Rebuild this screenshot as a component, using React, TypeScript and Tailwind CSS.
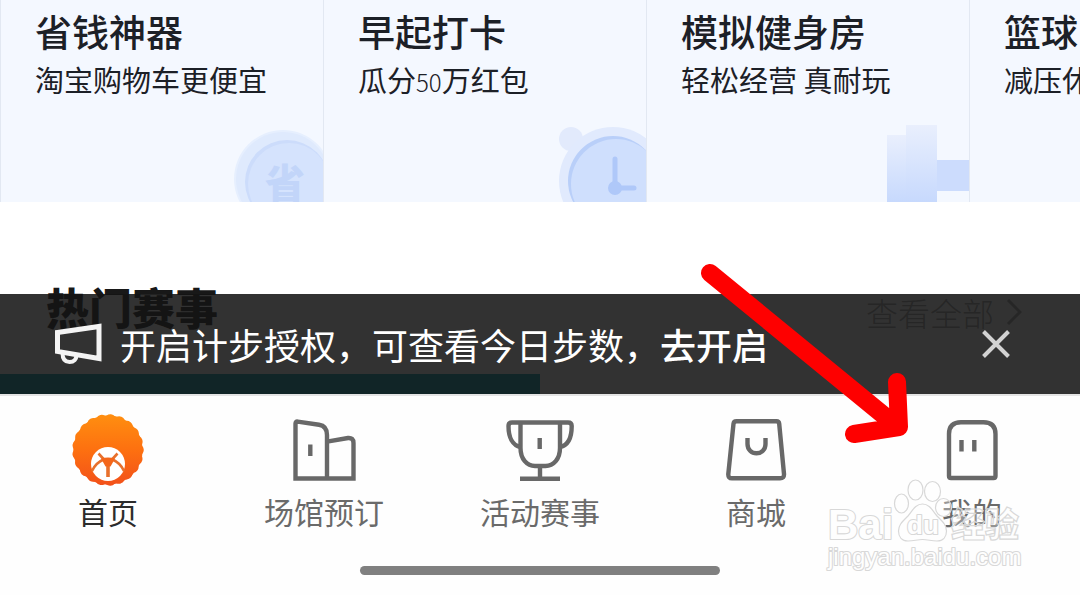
import type React from "react"

interface Tab {
  label: string
  icon: React.ReactNode
  active?: boolean
}

interface Promo {
  title: string
  text: React.ReactNode
  art?: React.ReactNode
}

const HomeIcon: React.FC = () => (
  <svg width="72" height="72" viewBox="0 0 72 72" aria-hidden="true">
    <defs>
      <linearGradient id="mane" gradientUnits="userSpaceOnUse" x1="0" y1="0" x2="0" y2="72">
        <stop offset="0" stopColor="#ff8f10" />
        <stop offset="0.5" stopColor="#fd7010" />
        <stop offset="1" stopColor="#f2501a" />
      </linearGradient>
    </defs>
    <circle cx="36" cy="36" r="34.7" fill="url(#mane)" />
    {/* Scalloped edge */}
    <circle
      cx="36"
      cy="36"
      r="29.8"
      fill="none"
      stroke="url(#mane)"
      strokeWidth="12"
      strokeLinecap="round"
      strokeDasharray="0.1 8.816"
    />
    <circle cx="36" cy="50" r="17" fill="#fff" />
    <g fill="none" stroke="#e8702c" strokeWidth="2.6">
      <path d="M26.500 39.500L32 45.500M45.500 39.500L40 45.500" />
      <path d="M36 50V63" strokeWidth="3.6" />
      <path d="M20 57Q23.500 49 31.500 45.500M52 57Q48.500 49 40.500 45.500" />
    </g>
    <path d="M29 44.500Q36 42.500 43 44.500L38.500 52.500H33.500Z" fill="#f4661a" />
  </svg>
)

const LineIcon: React.FC<{ children: React.ReactNode }> = ({ children }) => (
  <svg
    width="72"
    height="72"
    viewBox="0 0 72 72"
    fill="none"
    stroke="#686868"
    strokeWidth="4.4"
    aria-hidden="true"
  >
    {children}
  </svg>
)

const tabs: Tab[] = [
  { label: "首页", icon: <HomeIcon />, active: true },
  {
    label: "场馆预订",
    icon: (
      <LineIcon>
        <path d="M39 64.500H7.500V9.500Q7.500 7.300 9.700 7.600L31 10.800Q39 12 39 21ZM39 27.600L60 24Q65.500 23.500 65.500 29V64.500H39" />
        <path d="M22.300 30.500V42" />
      </LineIcon>
    ),
  },
  {
    label: "活动赛事",
    icon: (
      <LineIcon>
        <path d="M16.500 8.500V34C16.500 45 23 52 31 52H41.500C49.500 52 56 45 56 34V8.500" />
        <path d="M16.500 33C9 31.500 4.500 24 4.500 12Q4.500 8.500 8 8.500H64Q67.700 8.500 67.700 12C67.700 24 63.500 31.500 56 33" />
        <path d="M36 52V64.700M16 64.700H56M35.700 24V35" />
      </LineIcon>
    ),
  },
  {
    label: "商城",
    icon: (
      <LineIcon>
        <path d="M16.500 7.200H56.500Q59 7.200 59.200 9.700L64 60Q64.300 64.300 60 64.300H12Q8 64.300 8.300 60L13.500 9.700Q13.800 7.200 16.500 7.200Z" />
        <path d="M27.500 24V30C27.500 35.500 31.500 39.300 36.500 39.300S45.500 35.500 45.500 30V24" />
      </LineIcon>
    ),
  },
  {
    label: "我的",
    icon: (
      <LineIcon>
        <path d="M13 20Q13 8.200 25 8.200H47.500Q59.500 8.200 59.500 20V62Q59.500 64 57.500 64H15Q13 64 13 62Z" />
        <path d="M25.500 26V37.500M38.300 26V37.500" />
      </LineIcon>
    ),
  },
]

const CoinArt: React.FC = () => (
  <svg width="92" height="80" viewBox="0 0 92 80" aria-hidden="true">
    <circle cx="52" cy="57" r="49" fill="#e6effe" />
    <circle cx="52" cy="57" r="47" fill="#dfeafd" />
    <circle cx="56" cy="60" r="42" fill="#ccdcfb" />
    <circle cx="58" cy="62" r="41" fill="#d5e3fd" />
    <text
      x="34"
      y="76"
      fontSize="40"
      fontWeight="900"
      fill="#c2d5f9"
      fontFamily="'Noto Sans CJK SC', sans-serif"
    >
      省
    </text>
  </svg>
)

const ClockArt: React.FC = () => (
  <svg width="92" height="80" viewBox="0 0 92 80" aria-hidden="true">
    <circle cx="17" cy="17" r="12" fill="#e2eafc" />
    <circle cx="59" cy="59" r="54" fill="#e1eafd" />
    <circle cx="59" cy="59" r="45" fill="#b9cff9" />
    <circle cx="62" cy="62" r="45" fill="#cfdffd" />
    <g stroke="#afc8f9" strokeLinecap="round">
      <path d="M61 37V66" strokeWidth="5" />
      <path d="M61 66H80" strokeWidth="5" />
    </g>
    <circle cx="61" cy="66" r="7" fill="#afc8f9" />
  </svg>
)

const DumbbellArt: React.FC = () => (
  <svg width="92" height="80" viewBox="0 0 92 80" aria-hidden="true">
    <defs>
      <linearGradient id="plate" x1="0" y1="0" x2="0" y2="1">
        <stop offset="0" stopColor="#e9effd" />
        <stop offset="1" stopColor="#c7d9fd" />
      </linearGradient>
    </defs>
    <rect x="10" y="13" width="20" height="67" fill="url(#plate)" />
    <rect x="29" y="3" width="31" height="77" fill="url(#plate)" />
    <rect x="60" y="38" width="32" height="31" fill="#ccdcfd" />
  </svg>
)

const promos: Promo[] = [
  { title: "省钱神器", text: "淘宝购物车更便宜", art: <CoinArt /> },
  {
    title: "早起打卡",
    text: (
      <>
        瓜分<span className="text-2xl leading-none font-light">50</span>万红包
      </>
    ),
    art: <ClockArt />,
  },
  { title: "模拟健身房", text: "轻松经营 真耐玩", art: <DumbbellArt /> },
  { title: "篮球", text: "减压休" },
]

const PromoCard: React.FC<Promo> = ({ title, text, art }) => (
  <a
    href="#"
    className="flex h-[202px] w-[323px] shrink-0 flex-col overflow-hidden border-l border-[#e2e8f2] bg-[#f4f8ff] pt-[7px] text-[#1c2027]"
  >
    <h3 className="pl-[34px] text-[37px] leading-[48px] font-medium whitespace-nowrap">{title}</h3>
    <p className="pl-[34px] text-[29px] leading-[48px] whitespace-nowrap">{text}</p>
    <div className="mt-auto flex justify-end">{art}</div>
  </a>
)

const StepBanner: React.FC = () => (
  <div className="absolute inset-x-0 bottom-0 flex h-[100px] items-center bg-[#141414]/87 pr-[70px] pl-[54px] text-[36px] text-white">
    <svg width="48" height="42" viewBox="0 0 48 42" fill="none" stroke="#f4f4f4" aria-hidden="true">
      <path d="M3.500 9.500L45 3.500V35.500L3.500 28.500Z" strokeWidth="5" />
      <path d="M8.500 30C8.500 36 11 39 15.500 39S22.500 36 22.500 32" strokeWidth="4" />
    </svg>
    <p className="pl-[18px] leading-[48px] whitespace-nowrap">
      开启计步授权，可查看今日步数，
      <button type="button" className="font-medium">
        去开启
      </button>
    </p>
    <button type="button" aria-label="关闭" className="ml-auto">
      <svg width="28" height="28" viewBox="0 0 28 28" stroke="#d2d2d2" strokeWidth="4" aria-hidden="true">
        <path d="M1.500 1.500L26.500 26.500M26.500 1.500L1.500 26.500" />
      </svg>
    </button>
  </div>
)

const TabBar: React.FC = () => (
  <nav className="border-t-2 border-[#e4e4e4] bg-[#fefefe] pt-[18px] pb-5">
    <div className="grid grid-cols-5">
      {tabs.map((tab) => (
        <a
          key={tab.label}
          href="#"
          className={`flex flex-col items-center text-[30px] leading-[50px] ${tab.active ? "text-[#2c2c2c]" : "text-[#6a6a6a]"}`}
        >
          {tab.icon}
          <span>{tab.label}</span>
        </a>
      ))}
    </div>
    {/* Home indicator */}
    <div className="mx-auto mt-[30px] h-[9px] w-1/3 rounded-full bg-[#808080]" />
  </nav>
)

const Arrow: React.FC = () => (
  <svg
    className="pointer-events-none absolute top-[260px] left-[700px]"
    width="220"
    height="190"
    viewBox="0 0 220 190"
    fill="none"
    stroke="#fe0000"
    strokeWidth="18"
    strokeLinecap="round"
    strokeLinejoin="round"
    aria-hidden="true"
  >
    <path d="M10 13L198 167M197 122L199 167L154 174" />
  </svg>
)

const Watermark: React.FC = () => (
  <svg
    className="pointer-events-none absolute right-14 bottom-[19px]"
    width="200"
    height="100"
    viewBox="0 0 200 100"
    fill="#ffffff"
    fillOpacity="0.3"
    stroke="#d8d8d8"
    strokeWidth="1.2"
    fontFamily="'Liberation Sans', 'Noto Sans CJK SC', sans-serif"
  >
    <ellipse cx="77.500" cy="27.500" rx="7" ry="9.500" />
    <ellipse cx="91.500" cy="14" rx="7.500" ry="10" />
    <ellipse cx="108.500" cy="15.500" rx="8" ry="10" />
    <ellipse cx="119.500" cy="31.500" rx="8" ry="9" />
    <path d="M98.500 28C91 28 88.500 35 84 40C78 46 74.500 49 74.500 55C74.500 61 78 65 84 65C90 65 93 63.500 98.500 63.500S107 65 113 65C119 65 122.500 61 122.500 55C122.500 49 119 46 113 40C108.500 35 106 28 98.500 28Z" />
    <text x="127" y="61" fontSize="34" fontWeight="900" fontFamily="'Noto Sans CJK SC', sans-serif">
      经验
    </text>
    <g fill="#fefefe" fillOpacity="1" strokeWidth="2.2" strokeLinejoin="round" paintOrder="stroke">
      <text x="4" y="63" fontSize="42" fontWeight="700">
        Bai
      </text>
      <text x="83" y="58" fontSize="26" fontWeight="700">
        du
      </text>
      <text x="4" y="89" fontSize="24">
        jingyan.baidu.com
      </text>
    </g>
  </svg>
)

export default function App() {
  return (
    <div className="relative flex h-screen flex-col overflow-hidden bg-white font-['Noto_Sans_CJK_SC',sans-serif]">
      <main className="relative min-h-0 flex-1 overflow-hidden">
        <div className="flex overflow-hidden">
          {promos.map((promo) => (
            <PromoCard key={promo.title} {...promo} />
          ))}
        </div>

        {/* Popular events */}
        <div className="flex items-start justify-between pt-[74px] pr-[58px] pl-[46px]">
          <h2 className="text-[43px] leading-[60px] font-black text-[#181818]">热门赛事</h2>
          <a href="#" className="flex items-center gap-3 pt-1 text-[32px] leading-[64px] font-light text-[#a0a0a0]">
            查看全部
            <svg width="16" height="28" viewBox="0 0 16 28" fill="none" stroke="currentColor" strokeWidth="3" aria-hidden="true">
              <path d="M2 2L14 14L2 26" />
            </svg>
          </a>
        </div>
        <div className="mt-[30px] h-40 w-1/2 bg-[#009dac]" />

        <StepBanner />
      </main>
      <TabBar />
      <Arrow />
      <Watermark />
    </div>
  )
}
